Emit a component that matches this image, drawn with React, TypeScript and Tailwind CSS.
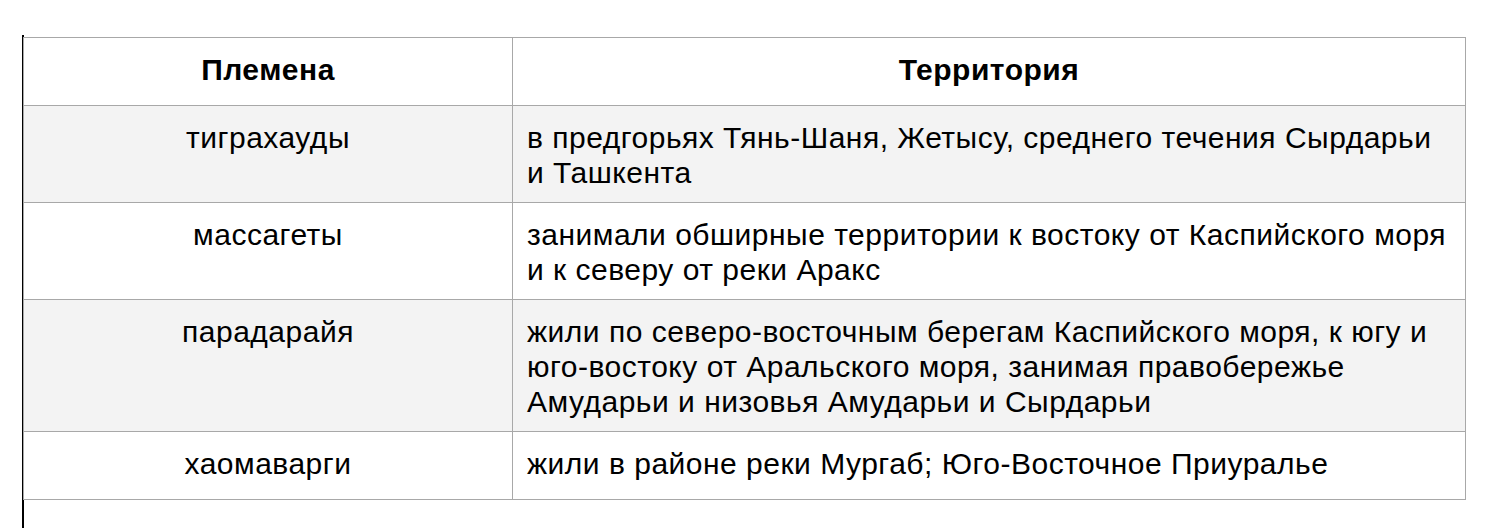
const rows = [
  {
    tribe: 'тиграхауды',
    lines: ['в предгорьях Тянь-Шаня, Жетысу, среднего течения Сырдарьи', 'и Ташкента'],
  },
  {
    tribe: 'массагеты',
    lines: ['занимали обширные территории к востоку от Каспийского моря', 'и к северу от реки Аракс'],
  },
  {
    tribe: 'парадарайя',
    lines: [
      'жили по северо-восточным берегам Каспийского моря, к югу и',
      'юго-востоку от Аральского моря, занимая правобережье',
      'Амударьи и низовья Амударьи и Сырдарьи',
    ],
  },
  {
    tribe: 'хаомаварги',
    lines: ['жили в районе реки Мургаб; Юго-Восточное Приуралье'],
  },
]

export default function App() {
  return (
    <div className="w-[1486px] h-[528px] bg-white pt-[35px] pl-[22px] font-['Liberation_Sans',Arial,sans-serif] text-black">
      <div className="h-full border-l-2 border-black pt-[2px]">
        <table className="w-[1443px] -ml-px border-collapse text-[30px] leading-[35px] tracking-[0.5px]">
          <colgroup>
            <col className="w-[489px]" />
            <col />
          </colgroup>
          <thead>
            <tr>
              <th className="h-[68px] border border-[#a8a8a8] px-[15px] pt-[11px] pb-[15px] text-center font-bold">Племена</th>
              <th className="h-[68px] border border-[#a8a8a8] px-[15px] pt-[11px] pb-[15px] text-center font-bold">Территория</th>
            </tr>
          </thead>
          <tbody>
            {rows.map((r, i) => (
              <tr key={r.tribe} className={i % 2 === 0 ? 'bg-[#f3f3f3]' : 'bg-white'}>
                <td className="h-[68px] border border-[#a8a8a8] px-[15px] pt-[14px] pb-[12px] text-center align-top">
                  {r.tribe}
                </td>
                <td className="h-[68px] border border-[#a8a8a8] px-[14px] pt-[14px] pb-[12px] text-left align-top whitespace-nowrap">
                  {r.lines.map((l, j) => (
                    <div key={j}>{l}</div>
                  ))}
                </td>
              </tr>
            ))}
          </tbody>
        </table>
      </div>
    </div>
  )
}
